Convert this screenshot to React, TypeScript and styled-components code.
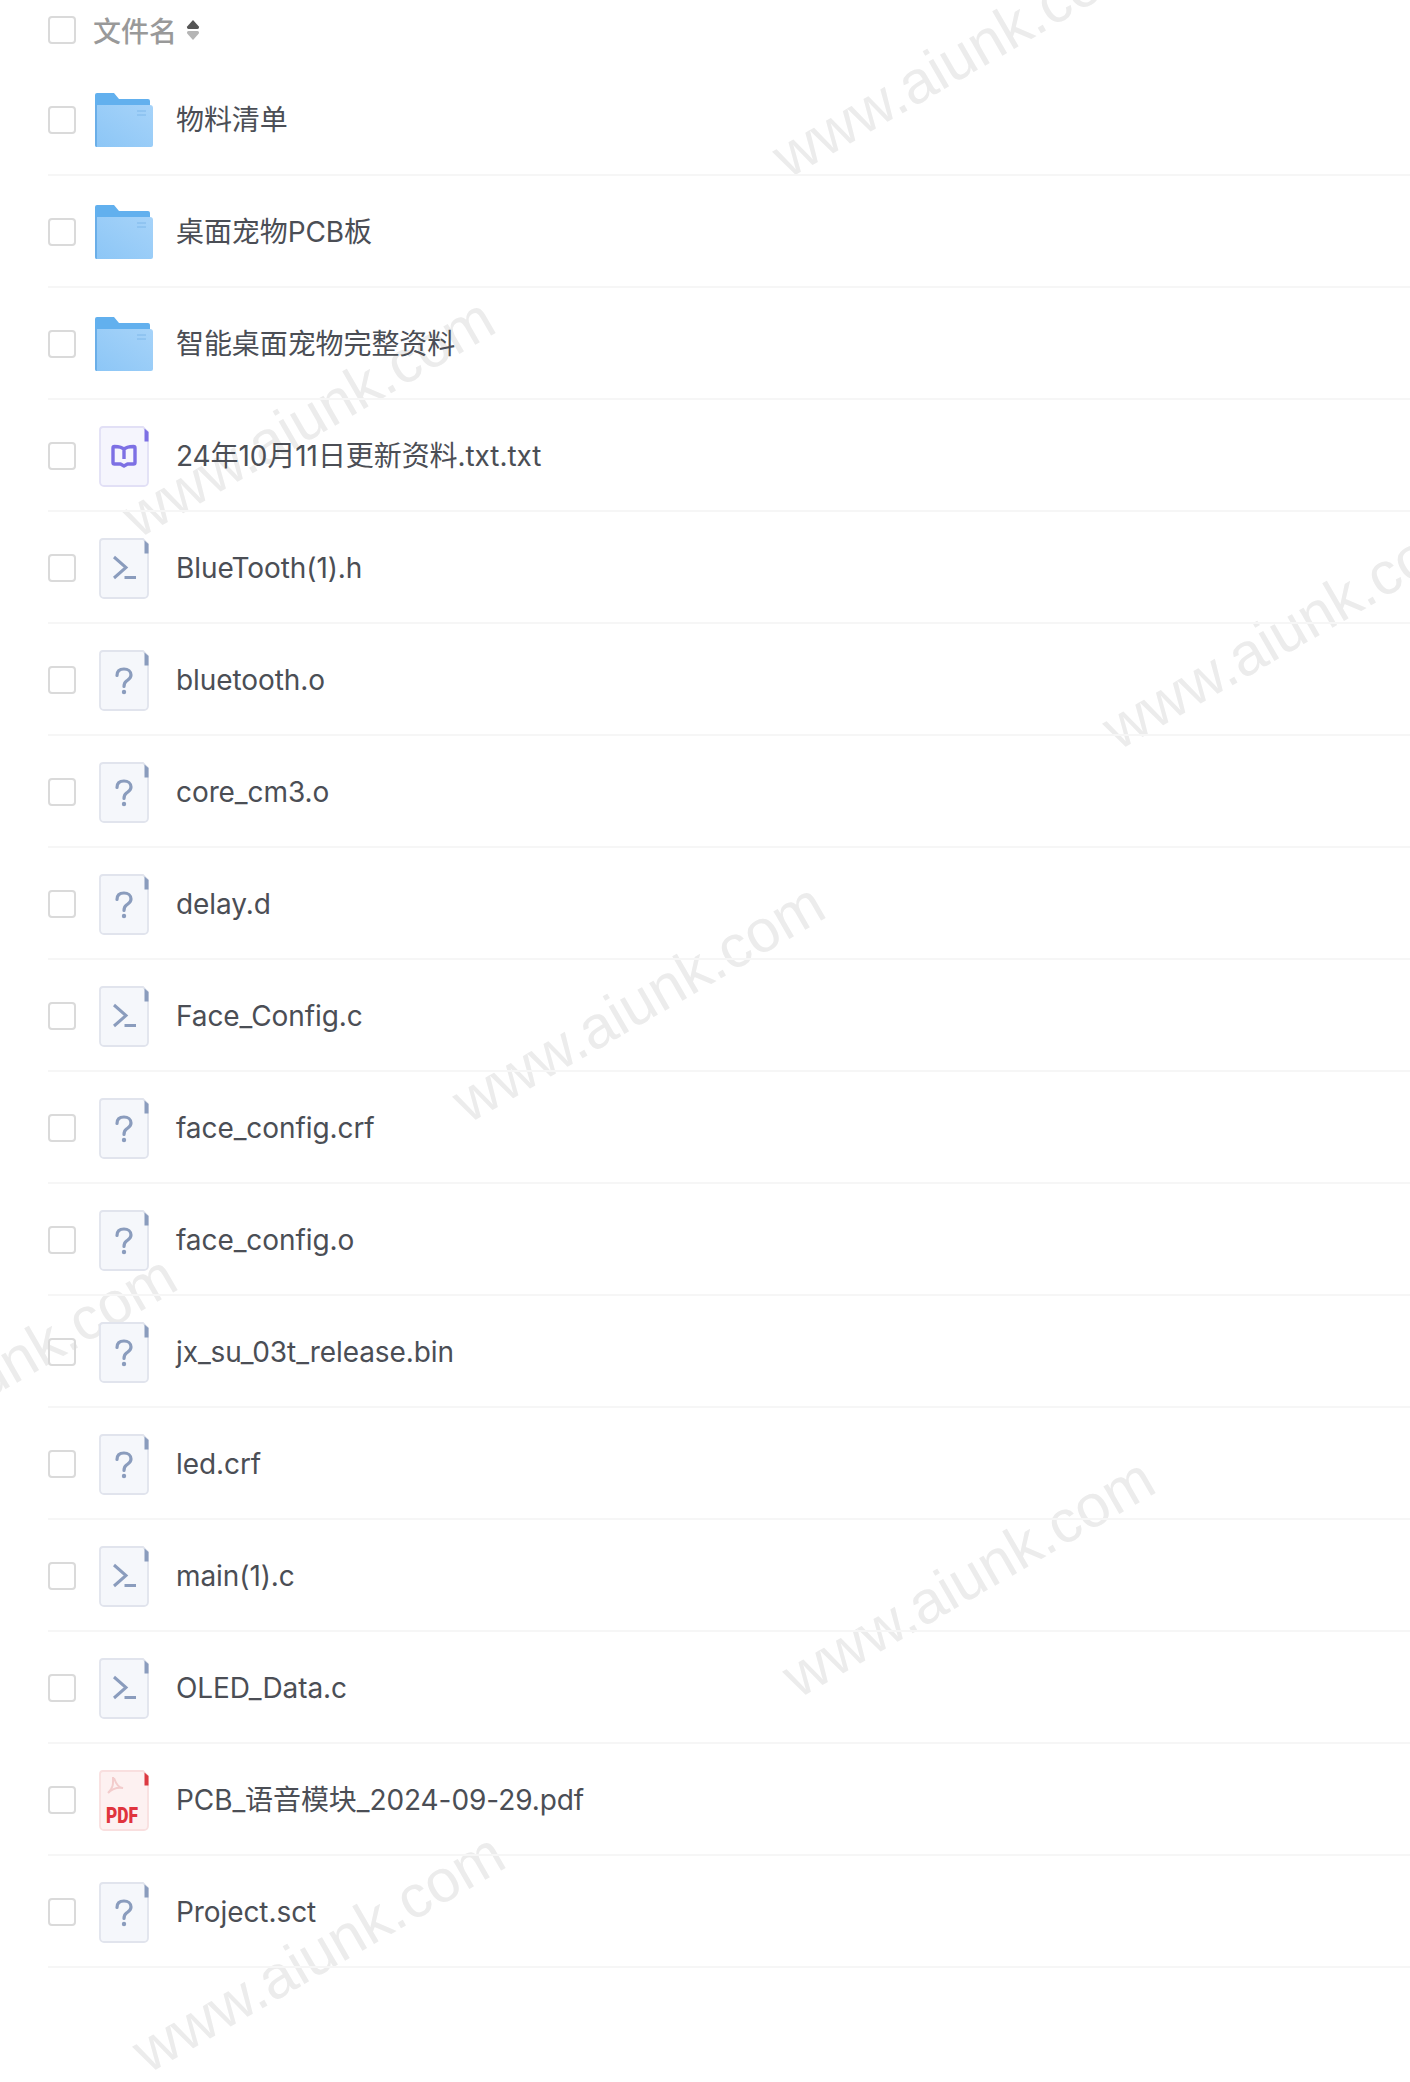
import React from "react";
import styled, { createGlobalStyle } from "styled-components";

type FileKind = "folder" | "book" | "code" | "unknown" | "pdf";

const FILES: { name: string; kind: FileKind }[] = [
  { name: "物料清单", kind: "folder" },
  { name: "桌面宠物PCB板", kind: "folder" },
  { name: "智能桌面宠物完整资料", kind: "folder" },
  { name: "24年10月11日更新资料.txt.txt", kind: "book" },
  { name: "BlueTooth(1).h", kind: "code" },
  { name: "bluetooth.o", kind: "unknown" },
  { name: "core_cm3.o", kind: "unknown" },
  { name: "delay.d", kind: "unknown" },
  { name: "Face_Config.c", kind: "code" },
  { name: "face_config.crf", kind: "unknown" },
  { name: "face_config.o", kind: "unknown" },
  { name: "jx_su_03t_release.bin", kind: "unknown" },
  { name: "led.crf", kind: "unknown" },
  { name: "main(1).c", kind: "code" },
  { name: "OLED_Data.c", kind: "code" },
  { name: "PCB_语音模块_2024-09-29.pdf", kind: "pdf" },
  { name: "Project.sct", kind: "unknown" },
];

const WATERMARKS = [
  { x: 793, y: 188 },
  { x: 143, y: 548 },
  { x: 1123, y: 760 },
  { x: 473, y: 1133 },
  { x: -175, y: 1505 },
  { x: 803, y: 1708 },
  { x: 153, y: 2083 },
];

const GlobalStyle = createGlobalStyle`
  html, body {
    margin: 0;
    padding: 0;
    background: #fff;
  }
  body {
    font-family: Inter, "Noto Sans CJK SC", "Noto Sans", sans-serif;
  }
`;

const Page = styled.div`
  position: relative;
  width: 1410px;
  height: 2082px;
  overflow: hidden;
  background: #fff;
`;

const List = styled.div`
  position: relative;
  margin-left: 48px;
`;

const HeaderRow = styled.div`
  display: flex;
  align-items: center;
  height: 60px;
  padding-bottom: 4px;
`;

const HeaderLabel = styled.span`
  margin-left: 17px;
  font-size: 28px;
  font-weight: 500;
  color: #999;
`;

const SortIcon = styled.svg`
  margin-left: 9px;
  width: 14px;
  height: 22px;
`;

const Row = styled.div`
  display: flex;
  align-items: center;
  box-sizing: border-box;
  height: 112px;
  padding-top: 2px;
  border-bottom: 2px solid #f6f6f6;
`;

const CheckBox = styled.span`
  flex: none;
  box-sizing: border-box;
  width: 28px;
  height: 28px;
  border: 2px solid #dadada;
  border-radius: 4px;
`;

const IconSlot = styled.span`
  flex: none;
  display: flex;
  justify-content: center;
  width: 58px;
  margin-left: 19px;
`;

const FileName = styled.span`
  margin-left: 23px;
  font-size: 28px;
  line-height: 34px;
  letter-spacing: -0.08px;
  color: #4b4e55;
  white-space: nowrap;
`;

const Watermark = styled.span<{ $x: number; $y: number }>`
  position: absolute;
  left: ${({ $x }) => $x}px;
  top: ${({ $y }) => $y - 60}px;
  font-family: "Liberation Sans", Arial, sans-serif;
  font-size: 60px;
  line-height: 60px;
  color: #ececec;
  white-space: nowrap;
  transform: rotate(-30deg);
  transform-origin: left bottom;
`;

const FolderIcon = () => (
  <svg width="58" height="54" viewBox="0 0 58 54">
    <defs>
      <linearGradient id="folderFront" x1="0" y1="1" x2="1" y2="0">
        <stop offset="0" stopColor="#8cc6f6" />
        <stop offset="1" stopColor="#a6d3f9" />
      </linearGradient>
    </defs>
    <path d="M2 0H19L24 6H53a2 2 0 0 1 2 2V20H0V2a2 2 0 0 1 2-2Z" fill="#62b0ee" />
    <path d="M0 12H55a3 3 0 0 1 3 3V52a2 2 0 0 1-2 2H2a2 2 0 0 1-2-2Z" fill="url(#folderFront)" />
    <path d="M0 12V52a2 2 0 0 0 2 2V12Z" fill="#6aaee8" />
    <path d="M42 18H51M42 22H51" stroke="#7fb8ea" strokeWidth="1" />
  </svg>
);

const SHEET = {
  book: { bg: "#f5f5fd", border: "#e2e0f6", flag: "#7d70e4" },
  code: { bg: "#f5f7fb", border: "#e1e4ed", flag: "#8a9cbd" },
  unknown: { bg: "#f5f7fb", border: "#e1e4ed", flag: "#8a9cbd" },
  pdf: { bg: "#fdf1f1", border: "#f9dfdf", flag: "#dc3a42" },
};

const SheetIcon = ({ kind }: { kind: Exclude<FileKind, "folder"> }) => {
  const c = SHEET[kind];
  return (
    <svg width="50" height="61" viewBox="0 0 50 61">
      <path
        d="M4 1H44L49 6V56a4 4 0 0 1-4 4H5a4 4 0 0 1-4-4V4a3 3 0 0 1 3-3Z"
        fill={c.bg}
        stroke={c.border}
        strokeWidth="1.8"
      />
      <path d="M45.5 2.5L49.5 6V15.5H45.5Z" fill={c.flag} />
      {kind === "book" && (
        <path
          d="M25 23.5C23 21 20 20.5 15.5 20.5A1.5 1.5 0 0 0 14 22V36.5A1.5 1.5 0 0 0 15.5 38H21.5L25 40L28.5 38H34.5A1.5 1.5 0 0 0 36 36.5V22A1.5 1.5 0 0 0 34.5 20.5C30 20.5 27 21 25 23.5V33"
          fill="none"
          stroke="#7d70e4"
          strokeWidth="3.4"
          strokeLinejoin="round"
        />
      )}
      {kind === "code" && (
        <g fill="none" stroke="#8a9cbd" strokeWidth="3">
          <path d="M15 19L27 29.5L15 40" />
          <path d="M25.5 39.5H37" />
        </g>
      )}
      {kind === "unknown" && (
        <g fill="none" stroke="#8a9cbd" strokeWidth="3.2" strokeLinecap="round">
          <path d="M18 25.5C18 21 21 19 25 19C29 19 32 21.5 32 25C32 28.5 29.5 29.5 27.5 31C25.5 32.5 25 33.5 25 36.5" />
          <circle cx="25" cy="42" r="2.2" fill="#8a9cbd" stroke="none" />
        </g>
      )}
      {kind === "pdf" && (
        <>
          <path
            d="M14 7C14 13 15 17 9 23C13 19 18 17 24 18C20 18 17 14 15 8"
            fill="none"
            stroke="#f3cccc"
            strokeWidth="2"
          />
          <text
            x="7"
            y="53"
            fontFamily="Roboto, sans-serif"
            fontWeight="900"
            fontSize="22"
            fill="#e0343d"
            textLength="32"
            lengthAdjust="spacingAndGlyphs"
          >
            PDF
          </text>
        </>
      )}
    </svg>
  );
};

export default function App() {
  return (
    <Page>
      <GlobalStyle />
      {WATERMARKS.map((w) => (
        <Watermark key={`${w.x}-${w.y}`} $x={w.x} $y={w.y}>
          www.aiunk.com
        </Watermark>
      ))}
      <List>
        <HeaderRow>
          <CheckBox />
          <HeaderLabel>文件名</HeaderLabel>
          <SortIcon viewBox="0 0 14 22">
            <path d="M7 1L12.6 7.2C13.6 8.4 12.8 10 11.4 10H2.6C1.2 10 0.4 8.4 1.4 7.2Z" fill="#555" />
            <path d="M7 21L12.6 14.8C13.6 13.6 12.8 12 11.4 12H2.6C1.2 12 0.4 13.6 1.4 14.8Z" fill="#b5b5b5" />
          </SortIcon>
        </HeaderRow>
        {FILES.map((f) => (
          <Row key={f.name}>
            <CheckBox />
            <IconSlot>{f.kind === "folder" ? <FolderIcon /> : <SheetIcon kind={f.kind} />}</IconSlot>
            <FileName>{f.name}</FileName>
          </Row>
        ))}
      </List>
    </Page>
  );
}
